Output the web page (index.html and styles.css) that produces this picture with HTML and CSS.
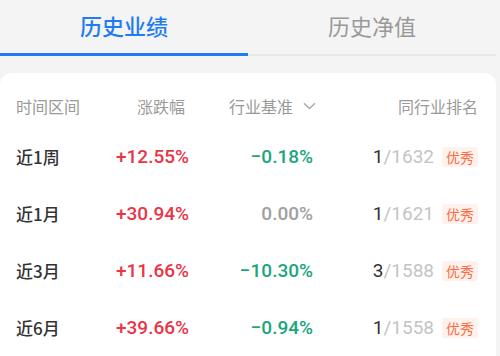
FILE: index.html
```html
<!DOCTYPE html>
<html lang="zh-CN">
<head>
<meta charset="utf-8">
<link rel="stylesheet" href="styles.css">
</head>
<body>
<div class="page">
  <div class="tabs">
    <div class="tab active">历史业绩</div>
    <div class="tab">历史净值</div>
  </div>
  <div class="card">
    <div class="row head">
      <div class="c1">时间区间</div>
      <div class="c2">涨跌幅</div>
      <div class="c3">行业基准<svg class="chev" width="13" height="8" viewBox="0 0 13 8"><path d="M1 1.2 L6.5 6.5 L12 1.2" fill="none" stroke="#a6a6a6" stroke-width="1.3"/></svg></div>
      <div class="c4">同行业排名</div>
    </div>
    <div class="row">
      <div class="c1 label">近1周</div>
      <div class="c2 num up">+12.55%</div>
      <div class="c3 num down">−0.18%</div>
      <div class="c4"><span class="rank"><b>1</b>/1632</span><span class="badge">优秀</span></div>
    </div>
    <div class="row">
      <div class="c1 label">近1月</div>
      <div class="c2 num up">+30.94%</div>
      <div class="c3 num flat">0.00%</div>
      <div class="c4"><span class="rank"><b>1</b>/1621</span><span class="badge">优秀</span></div>
    </div>
    <div class="row">
      <div class="c1 label">近3月</div>
      <div class="c2 num up">+11.66%</div>
      <div class="c3 num down">−10.30%</div>
      <div class="c4"><span class="rank"><b>3</b>/1588</span><span class="badge">优秀</span></div>
    </div>
    <div class="row">
      <div class="c1 label">近6月</div>
      <div class="c2 num up">+39.66%</div>
      <div class="c3 num down">−0.94%</div>
      <div class="c4"><span class="rank"><b>1</b>/1558</span><span class="badge">优秀</span></div>
    </div>
  </div>
</div>
</body>
</html>
```
FILE: styles.css
```css
html, body {
  margin: 0;
  padding: 0;
  background: #f4f4f4;
}
body {
  width: 500px;
  height: 356px;
  overflow: hidden;
  font-family: "Noto Sans CJK SC", "Noto Sans", sans-serif;
}
.page {
  width: 496px;
}
.tabs {
  display: flex;
  height: 54px;
  border-bottom: 2px solid #e8e8e8;
}
.tab {
  flex: 1;
  height: 54px;
  box-sizing: border-box;
  text-align: center;
  font-size: 22px;
  line-height: 50px;
  color: #999999;
  margin-bottom: -2px;
}
.tab.active {
  color: #1f7cf2;
  font-weight: 500;
  border-bottom: 3px solid #1f7cf2;
  height: 56px;
}
.card {
  margin-top: 17px;
  background: #ffffff;
  border-radius: 12px 12px 0 0;
  padding: 0 18px 0 16px;
  height: 300px;
}
.row {
  display: grid;
  grid-template-columns: 100px 69px 131px 162px;
  align-items: center;
  height: 57px;
}
.row.head {
  height: 45px;
  padding-top: 10px;
  font-size: 16px;
  color: #9a9a9a;
}
.c2, .c3, .c4 {
  text-align: right;
  white-space: nowrap;
}
.c3 {
  display: flex;
  justify-content: flex-end;
  align-items: center;
}
.chev {
  margin-left: 10px;
}
.c4 {
  display: flex;
  justify-content: flex-end;
  align-items: center;
}
.label {
  font-size: 17px;
  font-weight: 500;
  color: #333333;
}
.num {
  font-family: Roboto, "Noto Sans CJK SC", sans-serif;
  font-size: 19px;
  font-weight: 500;
}
.row .c3.num {
  padding-right: 3px;
}
.up { color: #ea3447; }
.down { color: #1ca57c; }
.flat { color: #a0a0a0; }
.rank {
  font-family: Roboto, "Noto Sans CJK SC", sans-serif;
  font-size: 19px;
  color: #c4c4c4;
}
.rank b {
  font-weight: 400;
  color: #333333;
}
.badge {
  margin-left: 8px;
  background: #fff2ec;
  color: #ff6a3f;
  font-size: 14px;
  line-height: 20px;
  padding: 0 4px;
  border-radius: 3px;
}
```
